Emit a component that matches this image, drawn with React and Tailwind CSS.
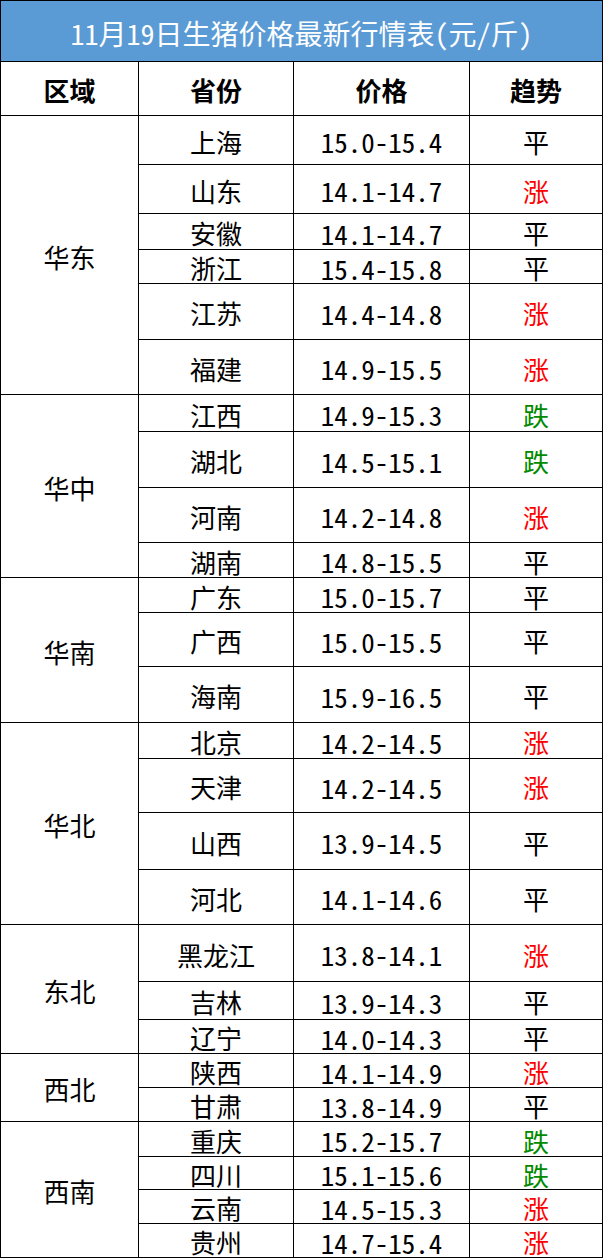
const regions = [
  {
    name: "华东",
    span: "row-span-6",
    rows: [
      ["上海", "15.0-15.4", "平"],
      ["山东", "14.1-14.7", "涨"],
      ["安徽", "14.1-14.7", "平"],
      ["浙江", "15.4-15.8", "平"],
      ["江苏", "14.4-14.8", "涨"],
      ["福建", "14.9-15.5", "涨"],
    ],
  },
  {
    name: "华中",
    span: "row-span-4",
    rows: [
      ["江西", "14.9-15.3", "跌"],
      ["湖北", "14.5-15.1", "跌"],
      ["河南", "14.2-14.8", "涨"],
      ["湖南", "14.8-15.5", "平"],
    ],
  },
  {
    name: "华南",
    span: "row-span-3",
    rows: [
      ["广东", "15.0-15.7", "平"],
      ["广西", "15.0-15.5", "平"],
      ["海南", "15.9-16.5", "平"],
    ],
  },
  {
    name: "华北",
    span: "row-span-4",
    rows: [
      ["北京", "14.2-14.5", "涨"],
      ["天津", "14.2-14.5", "涨"],
      ["山西", "13.9-14.5", "平"],
      ["河北", "14.1-14.6", "平"],
    ],
  },
  {
    name: "东北",
    span: "row-span-3",
    rows: [
      ["黑龙江", "13.8-14.1", "涨"],
      ["吉林", "13.9-14.3", "平"],
      ["辽宁", "14.0-14.3", "平"],
    ],
  },
  {
    name: "西北",
    span: "row-span-2",
    rows: [
      ["陕西", "14.1-14.9", "涨"],
      ["甘肃", "13.8-14.9", "平"],
    ],
  },
  {
    name: "西南",
    span: "row-span-4",
    rows: [
      ["重庆", "15.2-15.7", "跌"],
      ["四川", "15.1-15.6", "跌"],
      ["云南", "14.5-15.3", "涨"],
      ["贵州", "14.7-15.4", "涨"],
    ],
  },
];

const trendColor = {
  涨: "text-[#ff0000]",
  跌: "text-[#008a00]",
  平: "text-black",
};

// Excel-ish cells: text sits a hair below the middle
const cell = "flex items-center justify-center bg-white pt-[3px] leading-none";

export default function App() {
  return (
    <div className="w-[603px] bg-black p-px font-['Noto_Sans_Mono_CJK_SC','Noto_Sans_CJK_SC',sans-serif] text-black">
      <div className="flex flex-col gap-px">
        <div className="flex h-[60px] items-center justify-center bg-[#5b9bd5] pt-[3px] text-[28px] leading-none text-white">
          11月19日生猪价格最新行情表(元/斤)
        </div>
        <div className="grid grid-cols-[137px_154px_175px_132px] grid-rows-[53px_48px_48px_35px_33px_55px_54px_36px_55px_54px_34px_34px_53px_55px_35px_53px_56px_54px_56px_37px_33px_33px_33px_34px_32px_33px_33px] gap-px">
          <div className={`${cell} text-[26px] font-bold`}>区域</div>
          <div className={`${cell} text-[26px] font-bold`}>省份</div>
          <div className={`${cell} text-[26px] font-bold`}>价格</div>
          <div className={`${cell} text-[26px] font-bold`}>趋势</div>

          {regions.map((r) => [
            <div key={r.name} className={`${cell} ${r.span} text-[26px]`}>
              {r.name}
            </div>,
            ...r.rows.flatMap(([prov, price, trend]) => [
              <div key={prov + "p"} className={`${cell} text-[26px]`}>
                {prov}
              </div>,
              <div key={prov + "v"} className={`${cell} text-[27px]`}>
                {price}
              </div>,
              <div key={prov + "t"} className={`${cell} text-[26px] ${trendColor[trend]}`}>
                {trend}
              </div>,
            ]),
          ])}
        </div>
      </div>
    </div>
  );
}
